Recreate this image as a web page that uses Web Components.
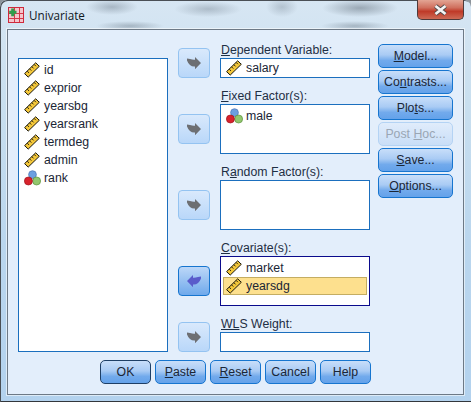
<!DOCTYPE html>
<html>
<head>
<meta charset="utf-8">
<title>Univariate</title>
<style>
  html, body { margin: 0; padding: 0; background: #8d949b; }
</style>
</head>
<body>
<spss-dialog heading="Univariate">
  <var-list slot="source">
    <var-item type="scale">id</var-item>
    <var-item type="scale">exprior</var-item>
    <var-item type="scale">yearsbg</var-item>
    <var-item type="scale">yearsrank</var-item>
    <var-item type="scale">termdeg</var-item>
    <var-item type="scale">admin</var-item>
    <var-item type="nominal">rank</var-item>
  </var-list>

  <target-field slot="targets" size="short">
    <span slot="label"><u>D</u>ependent Variable:</span>
    <var-item type="scale">salary</var-item>
  </target-field>
  <target-field slot="targets" size="tall">
    <span slot="label"><u>F</u>ixed Factor(s):</span>
    <var-item type="nominal">male</var-item>
  </target-field>
  <target-field slot="targets" size="tall">
    <span slot="label">R<u>a</u>ndom Factor(s):</span>
  </target-field>
  <target-field slot="targets" size="tall" active>
    <span slot="label"><u>C</u>ovariate(s):</span>
    <var-item type="scale">market</var-item>
    <var-item type="scale" selected>yearsdg</var-item>
  </target-field>
  <target-field slot="targets" size="short">
    <span slot="label"><u>WL</u>S Weight:</span>
  </target-field>

  <dlg-button slot="side"><u>M</u>odel...</dlg-button>
  <dlg-button slot="side">Co<u>n</u>trasts...</dlg-button>
  <dlg-button slot="side">Plo<u>t</u>s...</dlg-button>
  <dlg-button slot="side" disabled>Post <u>H</u>oc...</dlg-button>
  <dlg-button slot="side"><u>S</u>ave...</dlg-button>
  <dlg-button slot="side"><u>O</u>ptions...</dlg-button>

  <dlg-button slot="footer" default>OK</dlg-button>
  <dlg-button slot="footer"><u>P</u>aste</dlg-button>
  <dlg-button slot="footer"><u>R</u>eset</dlg-button>
  <dlg-button slot="footer">Cancel</dlg-button>
  <dlg-button slot="footer">Help</dlg-button>
</spss-dialog>

<script>
const FONT = '"Liberation Sans", Arial, sans-serif';

const RULER = `
  <svg width="16" height="16" viewBox="0 0 16 16">
    <path d="M.6 11.600 11.700.8 15.300 4.300 4.200 15.100Z" fill="#f5c83a" stroke="#17150c" stroke-width="1"/>
    <path d="M3.200 9.100 5 10.900M5.500 6.800 7.300 8.600M7.800 4.600 9.600 6.400M10.100 2.400 11.900 4.200" stroke="#2c2610" stroke-width="1"/>
  </svg>`;

const BALLS = `
  <svg width="17" height="16" viewBox="0 0 17 16">
    <circle cx="8.500" cy="4.600" r="3.900" fill="#6c9fe0" stroke="#4a74b4" stroke-width=".7"/>
    <circle cx="12.600" cy="11" r="4" fill="#93c76e" stroke="#5d9240" stroke-width=".7"/>
    <circle cx="4.400" cy="11" r="4" fill="#d8222c" stroke="#a01620" stroke-width=".7"/>
  </svg>`;

class VarItem extends HTMLElement {
  constructor() {
    super();
    this.attachShadow({ mode: 'open' });
    const icon = this.getAttribute('type') === 'nominal' ? BALLS : RULER;
    this.shadowRoot.innerHTML = `
      <style>
        :host { display: flex; align-items: center; height: 18px; box-sizing: border-box; padding-left: 5px; gap: 4px; }
        :host([selected]) { background: #fde08e; outline: 1px solid #c4ad62; outline-offset: -1px; margin: 0 2px; padding-left: 3px; }
        .icon { width: 16px; height: 16px; display: flex; align-items: center; justify-content: center; }
        svg { display: block; flex: none; }
      </style>
      <span class="icon">${icon}</span><span><slot></slot></span>`;
  }
}
customElements.define('var-item', VarItem);

class VarList extends HTMLElement {
  constructor() {
    super();
    this.attachShadow({ mode: 'open' });
    this.shadowRoot.innerHTML = `
      <style>
        :host { display: block; box-sizing: border-box; width: 150px; height: 294px; padding: 2px 0 0 0; background: #fff; border: 1px solid #1b6fbe; }
      </style>
      <slot></slot>`;
  }
}
customElements.define('var-list', VarList);

class ArrowButton extends HTMLElement {
  constructor() {
    super();
    this.attachShadow({ mode: 'open' });
    this.shadowRoot.innerHTML = `
      <style>
        :host { display: flex; align-items: center; justify-content: center; box-sizing: border-box; width: 32px; height: 30px; border-radius: 4px;
                border: 1px solid #94c3f1; background: linear-gradient(#d9e9fc, #b9d7f9); }
        :host([active]) { border-color: #1675cf; background: linear-gradient(#bcd7f8, #6fa9eb); }
        svg { display: block; fill: #6d6f73; }
        :host([active]) svg { fill: #5a5ccb; transform: scaleX(-1); }
      </style>
      <svg width="14" height="13" viewBox="0 0 14 13"><path d="M0 1.500 3 2Q6 3 8 2.700V0L14 6 8 12.200V9.500Q2.500 10 0 3.500Z"/></svg>`;
  }
}
customElements.define('arrow-button', ArrowButton);

class TargetField extends HTMLElement {
  constructor() {
    super();
    this.attachShadow({ mode: 'open' });
    const tall = this.getAttribute('size') === 'tall';
    const active = this.hasAttribute('active');
    this.shadowRoot.innerHTML = `
      <style>
        :host { display: grid; grid-template-columns: 32px 150px; column-gap: 10px; grid-template-rows: 26px ${tall ? 50 : 20}px; }
        arrow-button { grid-column: 1; grid-row: 1 / 3; align-self: end; margin-bottom: ${tall ? 10 : 0}px; }
        .label { grid-column: 2; grid-row: 1; align-self: end; height: 16px; line-height: 16px; white-space: nowrap; padding-left: 1px; color: #1f2f44; }
        .box { grid-column: 2; grid-row: 2; box-sizing: border-box; background: #fff; border: 1px solid ${active ? '#0a0a8c' : '#1b6fbe'}; padding-top: ${tall ? 2 : 0}px; overflow: hidden; }
      </style>
      <arrow-button ${active ? 'active' : ''}></arrow-button>
      <div class="label"><slot name="label"></slot></div>
      <div class="box"><slot></slot></div>`;
  }
}
customElements.define('target-field', TargetField);

class DlgButton extends HTMLElement {
  constructor() {
    super();
    this.attachShadow({ mode: 'open' });
    this.shadowRoot.innerHTML = `
      <style>
        :host { display: flex; align-items: center; justify-content: center; box-sizing: border-box; height: 24px; border-radius: 5px; white-space: nowrap;
                border: 1px solid #1675cf; color: #1a2636; background: linear-gradient(#c8def9 0%, #a9cbf4 45%, #72aaec 70%, #64a2ea 100%); }
        :host([default]) { border-color: #1e3f66; }
        :host([disabled]) { color: #9aa6b4; border-color: #b4d3f4; background: linear-gradient(#e0ecfb, #c9def7); }
      </style>
      <span><slot></slot></span>`;
  }
}
customElements.define('dlg-button', DlgButton);

class SpssDialog extends HTMLElement {
  constructor() {
    super();
    this.attachShadow({ mode: 'open' });
    this.shadowRoot.innerHTML = `
      <style>
        :host { display: flex; flex-direction: column; position: relative; box-sizing: border-box; width: 471px; height: 402px; overflow: hidden;
                padding: 0 7px 7px 7px; border-radius: 7px 7px 0 0;
                font: 12.3px ${FONT}; color: #1a2636;
                box-shadow: inset 1px 1px 0 #4a4f55, inset 0 -1px 0 #33373c;
                background:
                  radial-gradient(ellipse 26px 8px at 112px 7px, rgba(96,110,124,.4), transparent),
                  radial-gradient(ellipse 34px 8px at 208px 9px, rgba(96,110,124,.35), transparent),
                  radial-gradient(ellipse 16px 10px at 282px 7px, rgba(96,110,124,.3), transparent),
                  radial-gradient(ellipse 38px 9px at 360px 8px, rgba(80,92,104,.45), transparent),
                  radial-gradient(ellipse 34px 5px at 130px 26px, rgba(96,110,124,.4), transparent),
                  radial-gradient(ellipse 34px 5px at 355px 26px, rgba(96,110,124,.4), transparent),
                  linear-gradient(#d7e6f3 0, #c9dfef 25%, #bad6ee 60%, #b3d2ee 100%); }
        .title { display: flex; align-items: center; gap: 5px; height: 29px; flex: none; padding-left: 1px; color: #10181f; font: 11.7px "Open Sans", ${FONT}; }
        .title svg { display: block; }
        .close { position: absolute; top: 0; right: 7px; width: 47px; height: 20px; box-sizing: border-box; display: flex; align-items: center; justify-content: center;
                 border: 1px solid #4e3a3a; border-top: 0; border-radius: 0 0 5px 5px;
                 background: linear-gradient(#e3a594 0, #d0705e 40%, #bf3a28 60%, #cd6a55 100%); }
        .panel { flex: 1; box-sizing: border-box; display: flex; flex-direction: column; background: #e3eefb; border: 1px solid #6d7986; box-shadow: 0 0 0 1px rgba(255,255,255,.55); }
        .main { display: flex; height: 322px; flex: none; padding-left: 10px; }
        .source { flex: none; margin-top: 28px; }
        .targets { flex: none; margin: 2px 0 0 10px; display: flex; flex-direction: column; }
        .side { flex: none; width: 75px; margin: 14px 0 0 8px; display: flex; flex-direction: column; gap: 2px; }
        .footer { display: grid; grid-template-columns: repeat(5, 51px); column-gap: 4px; margin: 8px 0 0 92px; }
      </style>
      <div class="title">
        <svg width="16" height="16" viewBox="0 0 16 16">
          <rect x=".5" y=".5" width="15" height="15" fill="#f4c6cc" stroke="#cf2a3c"/>
          <path d="M6.500 1v14M11.500 1v14M1 6.500h14M1 11.500h14" stroke="#d5374a"/>
          <path d="M3.200 1.500h3v2.200h2.300v3H6.200v2.500h-3V6.700H1.200v-3h2Z" fill="#2f9e4c"/>
        </svg>
        <span>${this.getAttribute('heading')}</span>
      </div>
      <div class="close">
        <svg width="17" height="12" viewBox="0 0 17 12">
          <path d="M3.500 2 13.500 10M13.500 2 3.500 10" stroke="#4d4a4a" stroke-width="4.500"/>
          <path d="M3.500 2 13.500 10M13.500 2 3.500 10" stroke="#f4f4f4" stroke-width="2.800"/>
        </svg>
      </div>
      <div class="panel">
        <div class="main">
          <div class="source"><slot name="source"></slot></div>
          <div class="targets"><slot name="targets"></slot></div>
          <div class="side"><slot name="side"></slot></div>
        </div>
        <div class="footer"><slot name="footer"></slot></div>
      </div>`;
  }
}
customElements.define('spss-dialog', SpssDialog);
</script>
</body>
</html>
